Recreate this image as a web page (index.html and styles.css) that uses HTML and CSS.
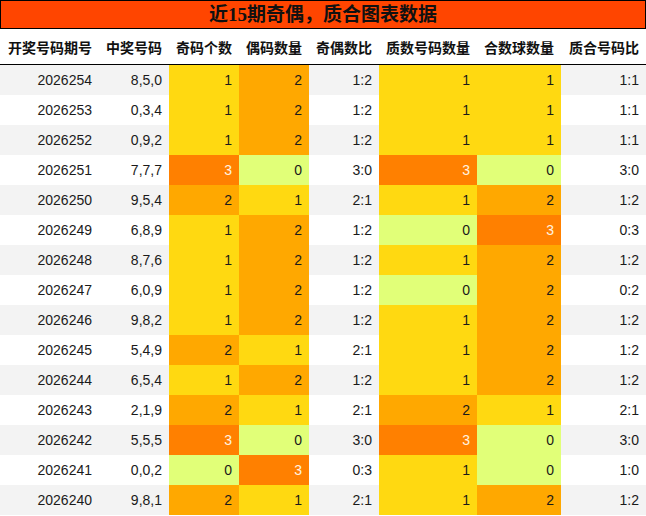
FILE: index.html
```html
<!DOCTYPE html>
<html lang="zh">
<head>
<meta charset="utf-8">
<title>近15期奇偶，质合图表数据</title>
<link rel="stylesheet" href="styles.css">
</head>
<body>
<div class="title">近15期奇偶，质合图表数据</div>
<table class="data">
  <colgroup>
    <col class="w99"><col class="w70"><col class="w70"><col class="w70"><col class="w70"><col class="w98"><col class="w84"><col class="w85">
  </colgroup>
  <thead>
    <tr><th>开奖号码期号</th><th>中奖号码</th><th>奇码个数</th><th>偶码数量</th><th>奇偶数比</th><th>质数号码数量</th><th>合数球数量</th><th>质合号码比</th></tr>
  </thead>
  <tbody>
    <tr><td>2026254</td><td>8,5,0</td><td class="v1">1</td><td class="v2">2</td><td>1:2</td><td class="v1">1</td><td class="v1">1</td><td>1:1</td></tr>
    <tr><td>2026253</td><td>0,3,4</td><td class="v1">1</td><td class="v2">2</td><td>1:2</td><td class="v1">1</td><td class="v1">1</td><td>1:1</td></tr>
    <tr><td>2026252</td><td>0,9,2</td><td class="v1">1</td><td class="v2">2</td><td>1:2</td><td class="v1">1</td><td class="v1">1</td><td>1:1</td></tr>
    <tr><td>2026251</td><td>7,7,7</td><td class="v3">3</td><td class="v0">0</td><td>3:0</td><td class="v3">3</td><td class="v0">0</td><td>3:0</td></tr>
    <tr><td>2026250</td><td>9,5,4</td><td class="v2">2</td><td class="v1">1</td><td>2:1</td><td class="v1">1</td><td class="v2">2</td><td>1:2</td></tr>
    <tr><td>2026249</td><td>6,8,9</td><td class="v1">1</td><td class="v2">2</td><td>1:2</td><td class="v0">0</td><td class="v3">3</td><td>0:3</td></tr>
    <tr><td>2026248</td><td>8,7,6</td><td class="v1">1</td><td class="v2">2</td><td>1:2</td><td class="v1">1</td><td class="v2">2</td><td>1:2</td></tr>
    <tr><td>2026247</td><td>6,0,9</td><td class="v1">1</td><td class="v2">2</td><td>1:2</td><td class="v0">0</td><td class="v2">2</td><td>0:2</td></tr>
    <tr><td>2026246</td><td>9,8,2</td><td class="v1">1</td><td class="v2">2</td><td>1:2</td><td class="v1">1</td><td class="v2">2</td><td>1:2</td></tr>
    <tr><td>2026245</td><td>5,4,9</td><td class="v2">2</td><td class="v1">1</td><td>2:1</td><td class="v1">1</td><td class="v2">2</td><td>1:2</td></tr>
    <tr><td>2026244</td><td>6,5,4</td><td class="v1">1</td><td class="v2">2</td><td>1:2</td><td class="v1">1</td><td class="v2">2</td><td>1:2</td></tr>
    <tr><td>2026243</td><td>2,1,9</td><td class="v2">2</td><td class="v1">1</td><td>2:1</td><td class="v2">2</td><td class="v1">1</td><td>2:1</td></tr>
    <tr><td>2026242</td><td>5,5,5</td><td class="v3">3</td><td class="v0">0</td><td>3:0</td><td class="v3">3</td><td class="v0">0</td><td>3:0</td></tr>
    <tr><td>2026241</td><td>0,0,2</td><td class="v0">0</td><td class="v3">3</td><td>0:3</td><td class="v1">1</td><td class="v0">0</td><td>1:0</td></tr>
    <tr><td>2026240</td><td>9,8,1</td><td class="v2">2</td><td class="v1">1</td><td>2:1</td><td class="v1">1</td><td class="v2">2</td><td>1:2</td></tr>
  </tbody>
</table>
</body>
</html>
```
FILE: styles.css
```css
html, body {
  margin: 0;
  padding: 0;
  background: #fff;
}
body {
  width: 646px;
  font-family: "Liberation Sans", "Noto Sans CJK SC", sans-serif;
  color: #1a1a1a;
}
.title {
  height: 27px;
  line-height: 27px;
  border: 1px solid #000;
  background: #ff4500;
  color: #111;
  text-align: center;
  font-family: "Liberation Serif", "Noto Sans CJK SC", serif;
  font-weight: bold;
  font-size: 19px;
}
.data {
  width: 646px;
  border-collapse: collapse;
  table-layout: fixed;
  font-size: 14px;
}
.w99 { width: 99px; }
.w70 { width: 70px; }
.w98 { width: 98px; }
.w84 { width: 84px; }
.w85 { width: 85px; }
.data th {
  height: 35px;
  padding: 0 7px 0 0;
  text-align: right;
  font-weight: bold;
  font-size: 14px;
  color: #111;
  border-bottom: 1px solid #000;
  white-space: nowrap;
}
.data td {
  height: 30px;
  padding: 0 7px 0 0;
  text-align: right;
  white-space: nowrap;
}
.data tbody tr:nth-child(odd) { background: #f3f3f3; }
.data tbody tr:nth-child(even) { background: #fff; }
.data td.v0 { background: #e1ff78; }
.data td.v1 { background: #ffd911; }
.data td.v2 { background: #ffa800; }
.data td.v3 { background: #ff8000; color: #fff4e0; }
```
